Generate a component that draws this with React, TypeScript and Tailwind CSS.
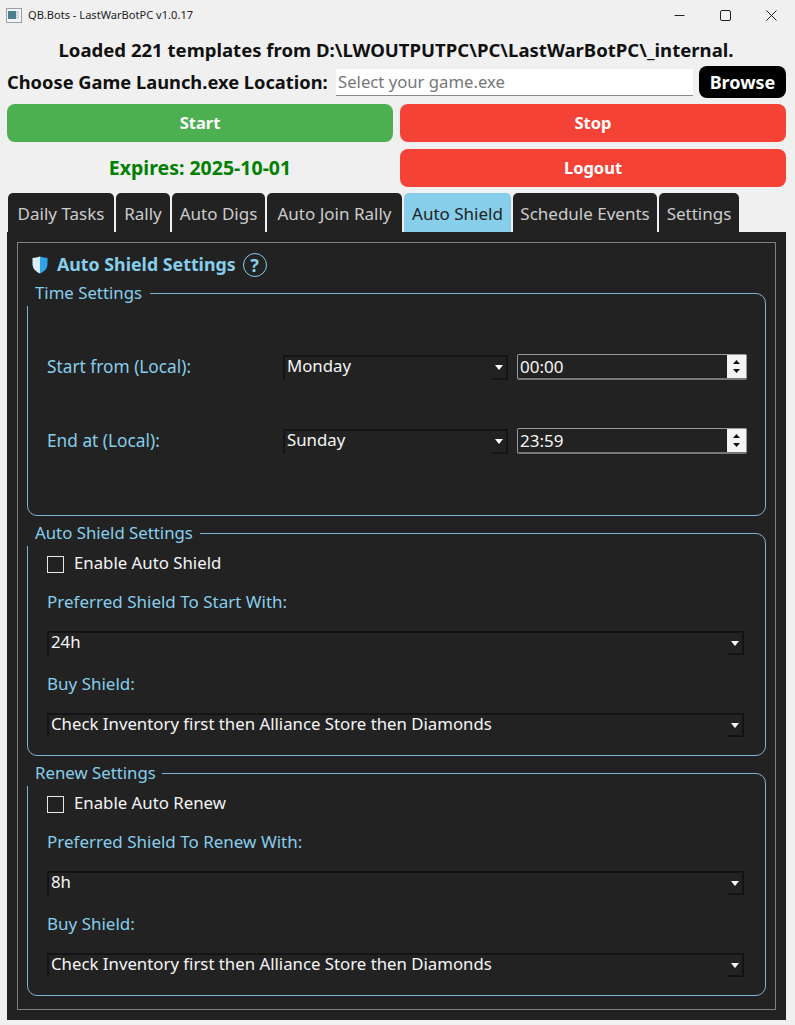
const TABS = [
  { label: 'Daily Tasks', width: 'w-[106px]' },
  { label: 'Rally', width: 'w-[54px]' },
  { label: 'Auto Digs', width: 'w-[93px]' },
  { label: 'Auto Join Rally', width: 'w-[135px]' },
  { label: 'Auto Shield', width: 'w-[107px]', active: true },
  { label: 'Schedule Events', width: 'w-[144px]' },
  { label: 'Settings', width: 'w-[80px]' },
]

const INVENTORY_FIRST = 'Check Inventory first then Alliance Store then Diamonds'

function Combo({ value, className }: { value: string; className: string }) {
  return (
    <div className={`flex items-center border-t-2 border-l-2 border-[#141414] text-[#f5f5f5] text-[16.800px] ${className}`}>
      <span className="flex-1 pb-[4px] pl-[2px] leading-none">{value}</span>
      <span className="flex h-full w-[16px] items-center justify-center self-stretch border-r-2 border-b-2 border-[#141414]">
        <svg width="8" height="5" viewBox="0 0 8 5">
          <path d="M0 0h8L4 5z" fill="#fff" />
        </svg>
      </span>
    </div>
  )
}

function TimeSpin({ value }: { value: string }) {
  return (
    <div className="flex h-[26px] w-[230px] items-stretch rounded-[2px] border border-[#9a9a9a] border-b-2 border-b-[#777]">
      <span className="flex-1 pl-[2px] text-[17px] leading-[24px] text-[#f5f5f5]">{value}</span>
      <span className="flex w-[19px] flex-col items-center justify-around bg-[#f4f4f4] py-[2px]">
        <svg width="7" height="4" viewBox="0 0 7 4">
          <path d="M3.5 0L7 4H0z" fill="#111" />
        </svg>
        <svg width="7" height="4" viewBox="0 0 7 4">
          <path d="M0 0h7L3.5 4z" fill="#111" />
        </svg>
      </span>
    </div>
  )
}

function Group({ title, titleWidth, className, children }: { title: string; titleWidth: string; className?: string; children: React.ReactNode }) {
  return (
    <section className={`relative mx-[9px] h-[223px] rounded-[10px] border border-[#7fb4d2] ${className ?? ''}`}>
      <h3 className={`absolute top-[-11px] left-[-2px] h-[23px] bg-[#222222] pl-[9px] text-[16.800px] leading-[20px] font-normal text-[#87ceeb] ${titleWidth}`}>
        {title}
      </h3>
      {children}
    </section>
  )
}

function ShieldGroup({ title, titleWidth, check, prefer, shield, className }: { title: string; titleWidth: string; check: string; prefer: string; shield: string; className?: string }) {
  return (
    <Group title={title} titleWidth={titleWidth} className={className}>
      <div className="flex flex-col pt-[22px] pl-[19px] text-[17px]">
        <label className="flex h-[17px] items-center gap-[10px] text-[16.800px] text-[#f5f5f5]">
          <span className="h-[17px] w-[17px] border border-[#e8e8e8]" />
          <span className="pb-[4px]">{check}</span>
        </label>
        <div className="mt-[17px] h-[24px] leading-[24px] text-[#87ceeb]">{prefer}</div>
        <Combo value={shield} className="mt-[17px] h-[24px] w-[697px]" />
        <div className="mt-[17px] h-[24px] leading-[24px] text-[#87ceeb]">Buy Shield:</div>
        <Combo value={INVENTORY_FIRST} className="mt-[17px] h-[24px] w-[697px]" />
      </div>
    </Group>
  )
}

export default function App() {
  return (
    <div className="h-[1025px] w-[795px] overflow-hidden bg-[#f0f0f0] font-['Noto_Sans',sans-serif]">
      {/* title bar */}
      <header className="flex h-[30px] items-center pl-[6px] text-[11.100px] text-[#222]">
        <svg width="16" height="15" viewBox="0 0 16 15" className="mr-[6px]">
          <rect x="0.5" y="0.5" width="15" height="14" fill="#f4f4f4" stroke="#9aa0a6" />
          <rect x="2" y="3" width="8" height="8" fill="#4a7f8c" />
          <rect x="10" y="3" width="3" height="8" fill="#cfdbe0" />
        </svg>
        <span className="pt-[1px]">QB.Bots - LastWarBotPC v1.0.17</span>
        <div className="ml-auto flex items-center gap-[35px] pr-[18px]">
          <svg width="11" height="11" viewBox="0 0 11 11">
            <path d="M0.5 5.5h10" stroke="#222" />
          </svg>
          <svg width="11" height="11" viewBox="0 0 11 11">
            <rect x="0.5" y="0.5" width="10" height="10" rx="1.5" fill="none" stroke="#222" />
          </svg>
          <svg width="11" height="11" viewBox="0 0 11 11">
            <path d="M0.5 0.5l10 10M10.5 0.5l-10 10" stroke="#222" />
          </svg>
        </div>
      </header>

      <div className="flex h-[36px] items-center justify-center pt-[4px] pr-[3px] text-[18.560px] font-bold text-[#111]">
        Loaded 221 templates from D:\LWOUTPUTPC\PC\LastWarBotPC\_internal.
      </div>

      <div className="flex h-[32px] items-center pl-[7px] text-[18.300px] font-bold text-[#111]">
        <span className="w-[329px]">Choose Game Launch.exe Location:</span>
        <div className="h-[27px] w-[357px] border-b border-[#8a8a8a] bg-white pl-[2px] text-[16.700px] leading-[26px] font-normal text-[#777]">
          Select your game.exe
        </div>
        <button className="ml-[6px] h-[32px] w-[87px] rounded-[8px] bg-black text-[18px] font-bold text-white">Browse</button>
      </div>

      <div className="mt-[6px] grid grid-cols-[386px_386px] gap-x-[7px] gap-y-[7px] px-[7px] text-[16.500px] font-bold text-white">
        <button className="h-[38px] rounded-[8px] bg-[#4caf50]">Start</button>
        <button className="h-[38px] rounded-[8px] bg-[#f44336]">Stop</button>
        <div className="flex h-[38px] items-center justify-center text-[19.500px] text-[#008000]">Expires: 2025-10-01</div>
        <button className="h-[38px] rounded-[8px] bg-[#f44336]">Logout</button>
      </div>

      <nav className="mt-[6px] flex h-[39px] gap-[2px] pl-[8px] text-[17px]">
        {TABS.map((t) => (
          <div
            key={t.label}
            className={`flex items-center justify-center rounded-t-[5px] pt-[2px] ${t.width} ${t.active ? 'bg-[#87ceeb] text-[#222222]' : 'bg-[#222222] text-[#cccccc]'}`}
          >
            {t.label}
          </div>
        ))}
      </nav>

      <main className="mx-[7px] h-[788px] w-[779px] bg-[#222222] p-[10px]">
        <div className="h-[768px] w-[759px] border border-[#808080]">
          <div className="flex h-[50px] items-center pb-[7px] pl-[14px] text-[17.800px] font-bold text-[#87ceeb]">
            <svg width="16" height="18" viewBox="0 0 16 18" className="mr-[9px]">
              <path d="M8 0.500C5.500 1.500 3 1.500 0.500 2V8c0 4.500 3 7.500 7.500 9.500z" fill="#d8eef9" />
              <path d="M8 0.500C10.500 1.500 13 1.500 15.500 2V8c0 4.500-3 7.500-7.500 9.500z" fill="#2ea3ea" />
            </svg>
            Auto Shield Settings
            <span className="ml-[7px] flex h-[24px] w-[24px] items-center justify-center rounded-full border border-[#87ceeb] text-[18px] leading-none">?</span>
          </div>

          <Group title="Time Settings" titleWidth="w-[124px]">
            <div className="flex flex-col gap-[48px] pt-[60px] pl-[19px] text-[17.300px]">
              <div className="flex h-[26px] items-center">
                <span className="w-[236px] text-[#87ceeb]">Start from (Local):</span>
                <Combo value="Monday" className="h-[25px] w-[225px]" />
                <span className="ml-[9px]"><TimeSpin value="00:00" /></span>
              </div>
              <div className="flex h-[26px] items-center">
                <span className="w-[236px] text-[#87ceeb]">End at (Local):</span>
                <Combo value="Sunday" className="h-[25px] w-[225px]" />
                <span className="ml-[9px]"><TimeSpin value="23:59" /></span>
              </div>
            </div>
          </Group>

          <ShieldGroup
            className="mt-[17px]"
            title="Auto Shield Settings"
            titleWidth="w-[174px]"
            check="Enable Auto Shield"
            prefer="Preferred Shield To Start With:"
            shield="24h"
          />
          <ShieldGroup
            className="mt-[17px]"
            title="Renew Settings"
            titleWidth="w-[136px]"
            check="Enable Auto Renew"
            prefer="Preferred Shield To Renew With:"
            shield="8h"
          />
        </div>
      </main>
    </div>
  )
}
